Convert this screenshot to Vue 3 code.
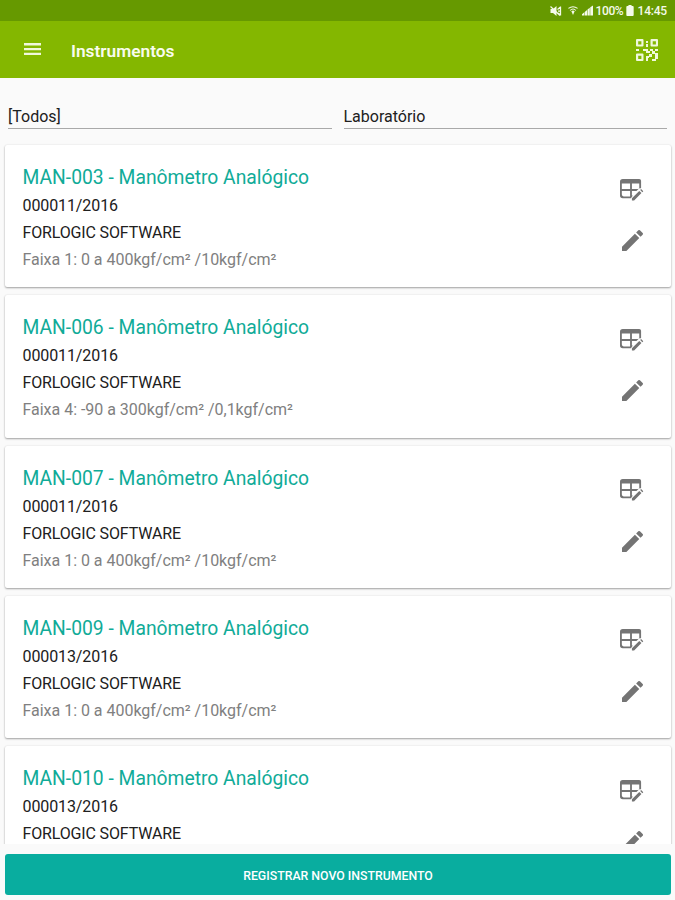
<template>
  <main class="page" aria-label="Instrumentos">

    <!-- System status bar -->
    <div class="status-bar">
      <svg class="status-mute" viewBox="0 0 24 24" aria-hidden="true">
        <path d="M2 8h5l7-6v20l-7-6H2z" />
        <path class="line" d="M2 3l19 18M16 9l6-5M17 12h5M17 16l5 4M22 3v18" />
      </svg>
      <svg class="status-wifi" viewBox="0 0 24 24" aria-hidden="true">
        <path class="line" d="M1 7Q12-1 23 7M5 12q7-7 14 0" />
        <path d="M8 14q4-4 8 0l-4 9z" />
      </svg>
      <svg class="status-signal" viewBox="0 0 24 22" aria-hidden="true">
        <path d="M0 22v-3l5-4v7zM6 22v-8l5-4v12zM12 22V9l5-4v17zM18 22V4l6-4v22z" />
      </svg>
      <span class="status-percent">100%</span>
      <svg class="status-battery" viewBox="0 0 8 12" aria-hidden="true">
        <path d="M2.3 0h3.4v1.2H7q1 0 1 1V11q0 1-1 1H1q-1 0-1-1V2.2q0-1 1-1h1.3z" />
      </svg>
      <span class="status-time">14:45</span>
    </div>

    <!-- Toolbar -->
    <header class="toolbar">
      <button class="icon-button" aria-label="Menu">
        <svg class="menu-icon" viewBox="0 0 17 12">
          <path d="M0 0h17v2.4H0zM0 5h17v2.2H0zM0 9.8h17V12H0z" />
        </svg>
      </button>
      <h1 class="toolbar-title">Instrumentos</h1>
      <button class="icon-button" aria-label="QR Code">
        <svg class="qr-icon" viewBox="0 0 22 22">
          <path fill-rule="evenodd" d="M1 0h5.5q1 0 1 1v5.500q0 1-1 1H1q-1 0-1-1V1q0-1 1-1zm1.200 2.200v3.200h3.200V2.200zM15.500 0H21q1 0 1 1v5.500q0 1-1 1h-5.500q-1 0-1-1V1q0-1 1-1zm1.200 2.200v3.200h3.200V2.200zM1 14.500h5.500q1 0 1 1V21q0 1-1 1H1q-1 0-1-1v-5.500q0-1 1-1zm1.200 2.200v3.200h3.200v-3.200z" />
          <path d="M10 2h2v2h-2zM10 5h2v3h-2zM0 10h3v2H0zM7 10h5v2h2v2h-4v-2H7zM14 10h3v2h-3zM19 10h3v2h-3zM16 12h3v3h-3zM10 17h3v2h-1v3h-2zM13 15h3v3h-3zM19 14h3v6h-2v2h-4v-2h3z" />
        </svg>
      </button>
    </header>

    <!-- Filters -->
    <div class="filters">
      <div v-for="filter in filters" :key="filter" class="filter">{{ filter }}</div>
    </div>

    <!-- Instruments list -->
    <div class="list">
      <article v-for="item in instruments" :key="item.code" class="card">
        <div class="card-text">
          <h2 class="card-title">{{ item.code }} - Manômetro Analógico</h2>
          <p class="card-line">{{ item.serial }}</p>
          <p class="card-line company">FORLOGIC SOFTWARE</p>
          <p v-if="item.range" class="card-line range">{{ item.range }}</p>
        </div>
        <div class="card-actions">
          <svg class="table-icon" viewBox="0 0 24 24">
            <path fill-rule="evenodd" d="M3 0h18q2 0 2 2v8h-2l-3 3h-5v5h1l-2 3H3q-3 0-3-3V3q0-3 3-3zM2 5v6h9V5zM13 5v6h8V5zM2 13v4q0 2 2 2h7v-6z" />
            <path d="M13 21l8-8 2.400 2.400-8 8H13zM22 12l1-1 2.400 2.400-1 1z" />
          </svg>
          <svg class="pencil-icon" viewBox="3 3 18 18">
            <path d="M3 17.25V21h3.75L17.81 9.94l-3.75-3.75L3 17.25zM20.71 7.04a1 1 0 0 0 0-1.41l-2.34-2.34a1 1 0 0 0-1.41 0l-1.83 1.83 3.75 3.75 1.83-1.83z" />
          </svg>
        </div>
      </article>
    </div>

    <footer class="footer">
      <button class="register-button">REGISTRAR NOVO INSTRUMENTO</button>
    </footer>
  </main>
</template>

<script setup>
import { ref } from 'vue'

const filters = ref(['[Todos]', 'Laboratório'])

const instruments = ref([
  { code: 'MAN-003', serial: '000011/2016', range: 'Faixa 1: 0 a 400kgf/cm² /10kgf/cm²' },
  { code: 'MAN-006', serial: '000011/2016', range: 'Faixa 4: -90 a 300kgf/cm² /0,1kgf/cm²' },
  { code: 'MAN-007', serial: '000011/2016', range: 'Faixa 1: 0 a 400kgf/cm² /10kgf/cm²' },
  { code: 'MAN-009', serial: '000013/2016', range: 'Faixa 1: 0 a 400kgf/cm² /10kgf/cm²' },
  { code: 'MAN-010', serial: '000013/2016' }
])
</script>

<style scoped>
.page {
  height: 900px;
  display: flex;
  flex-direction: column;
  overflow: hidden;
  background: #fafafa;
  color: #202020;
  font-family: Roboto, "Liberation Sans", sans-serif;
}

svg {
  display: block;
  flex: none;
  overflow: visible;
  fill: currentColor;
}

.line {
  fill: none;
  stroke: currentColor;
  stroke-width: 2.5;
}

button {
  border: 0;
  padding: 0;
  font-family: inherit;
  color: #fff;
  cursor: pointer;
}

.status-bar {
  flex: none;
  height: 21px;
  box-sizing: border-box;
  padding-right: 8px;
  display: flex;
  align-items: center;
  justify-content: flex-end;
  background: #669900;
  color: #f4faea;
  font-size: 12px;
  font-weight: 500;
  line-height: 22px;
}

.status-mute {
  width: 13px;
  height: 12px;
  margin-right: 6px;
}

.status-wifi {
  width: 10px;
  height: 11px;
  margin-right: 4px;
}

.status-signal {
  width: 11px;
  height: 11px;
  margin-right: 3px;
}

.status-percent {
  width: 30px;
  padding-top: 1px;
  letter-spacing: -0.4px;
}

.status-battery {
  width: 8px;
  height: 11px;
  margin-right: 4px;
}

.status-time {
  padding-top: 1px;
  letter-spacing: -0.2px;
}

.toolbar {
  flex: none;
  height: 57px;
  box-sizing: border-box;
  padding: 0 17px 0 24px;
  display: flex;
  align-items: center;
  background: #84b700;
}

.icon-button {
  background: none;
  color: #f0f8dc;
}

.menu-icon {
  width: 17px;
  height: 12px;
  margin-bottom: 1px;
}

.toolbar-title {
  flex: 1;
  margin: 2px 0 0 30px;
  font-size: 17.3px;
  font-weight: 600;
  line-height: 24px;
  color: #f8fcee;
}

.qr-icon {
  width: 22px;
  height: 22px;
}

.filters {
  flex: none;
  padding: 23px 8px 0;
  display: grid;
  grid-template-columns: 1fr 1fr;
  gap: 12px;
}

.filter {
  height: 26px;
  padding-top: 1px;
  border-bottom: 1px solid #a9a9a9;
  font-size: 16px;
  line-height: 29px;
}

.list {
  flex: 1;
  min-height: 0;
  margin-top: 10px;
  padding: 6px 4px 0 5px;
  overflow: hidden;
}

.card {
  height: 142.25px;
  margin-bottom: 8px;
  box-sizing: border-box;
  padding: 17px 27px 0 17.5px;
  display: flex;
  justify-content: space-between;
  border-radius: 2px;
  background: #fff;
  box-shadow: 0 1px 2px rgba(0, 0, 0, 0.34), 0 0 2px rgba(0, 0, 0, 0.08);
}

.card-title {
  margin: 0 0 -2px;
  font-size: 19.3px;
  font-weight: 400;
  line-height: 32px;
  color: #10ab98;
}

.card-line {
  margin: 0;
  font-size: 16px;
  line-height: 27px;
  letter-spacing: -0.1px;
}

.company {
  letter-spacing: -0.15px;
}

.range {
  color: #808080;
  letter-spacing: -0.02px;
}

.card-actions {
  width: 24px;
  padding-top: 16.5px;
  color: #747474;
}

.table-icon {
  width: 22px;
  height: 22px;
}

.pencil-icon {
  width: 21px;
  height: 21px;
  margin: 29.5px 0 0 2px;
}

.footer {
  flex: none;
  padding: 10px 4px 5px 5px;
}

.register-button {
  display: block;
  width: 100%;
  height: 41px;
  padding-top: 2px;
  border-radius: 3px;
  background: #09ad9f;
  font-size: 12.3px;
  font-weight: 500;
}
</style>
